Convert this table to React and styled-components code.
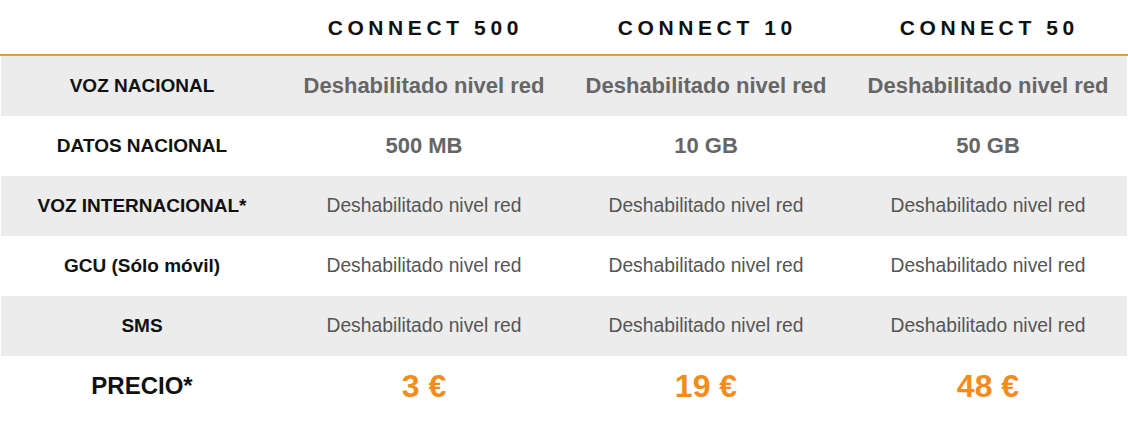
import React from 'react'
import styled, { createGlobalStyle } from 'styled-components'

const GlobalStyle = createGlobalStyle`
  html, body {
    margin: 0;
    padding: 0;
    background: #fff;
  }
  body {
    font-family: "Liberation Sans", Arial, sans-serif;
  }
`

const StyledTable = styled.div`
  width: 1128px;
  height: 424px;
  display: flex;
  flex-direction: column;
`

const StyledHead = styled.div`
  display: grid;
  grid-template-columns: repeat(4, 282px);
  height: 54px;
  align-items: center;
  border-bottom: 2px solid #e39b3f;
`

const StyledPlan = styled.div`
  text-align: center;
  font-size: 21px;
  font-weight: bold;
  letter-spacing: 4.6px;
  color: #111;
  padding-left: 4.6px;
  padding-top: 1px;
`

const StyledRow = styled.div`
  display: grid;
  grid-template-columns: repeat(4, 282px);
  height: 60px;
  align-items: center;
  margin: 0 1px;
  background: ${(p) => (p.$shaded ? '#ececec' : '#fff')};
`

const StyledLabel = styled.div`
  text-align: center;
  font-weight: bold;
  font-size: ${(p) => (p.$big ? '24px' : '19px')};
  color: #111;
`

const StyledValue = styled.div`
  text-align: center;
  font-size: ${(p) => (p.$strong ? '22px' : '19.3px')};
  font-weight: ${(p) => (p.$strong ? 'bold' : 'normal')};
  color: ${(p) => (p.$strong ? '#666' : '#555')};
`

const StyledPrice = styled.div`
  text-align: center;
  font-size: 32px;
  font-weight: bold;
  color: #f28c1c;
`

const plans = ['CONNECT 500', 'CONNECT 10', 'CONNECT 50']
const off = 'Deshabilitado nivel red'

const rows = [
  { label: 'VOZ NACIONAL', values: [off, off, off], strong: true },
  { label: 'DATOS NACIONAL', values: ['500 MB', '10 GB', '50 GB'], strong: true },
  { label: 'VOZ INTERNACIONAL*', values: [off, off, off] },
  { label: 'GCU (Sólo móvil)', values: [off, off, off] },
  { label: 'SMS', values: [off, off, off] },
]

const prices = ['3 €', '19 €', '48 €']

const App = () => {
  return (
    <>
      <GlobalStyle />
      <StyledTable>
        <StyledHead>
          <div />
          {plans.map((p) => (
            <StyledPlan key={p}>{p}</StyledPlan>
          ))}
        </StyledHead>
        {rows.map((row, i) => (
          <StyledRow key={row.label} $shaded={i % 2 === 0}>
            <StyledLabel>{row.label}</StyledLabel>
            {row.values.map((v, j) => (
              <StyledValue key={j} $strong={row.strong}>
                {v}
              </StyledValue>
            ))}
          </StyledRow>
        ))}
        <StyledRow>
          <StyledLabel $big>PRECIO*</StyledLabel>
          {prices.map((p) => (
            <StyledPrice key={p}>{p}</StyledPrice>
          ))}
        </StyledRow>
      </StyledTable>
    </>
  )
}

export default App
